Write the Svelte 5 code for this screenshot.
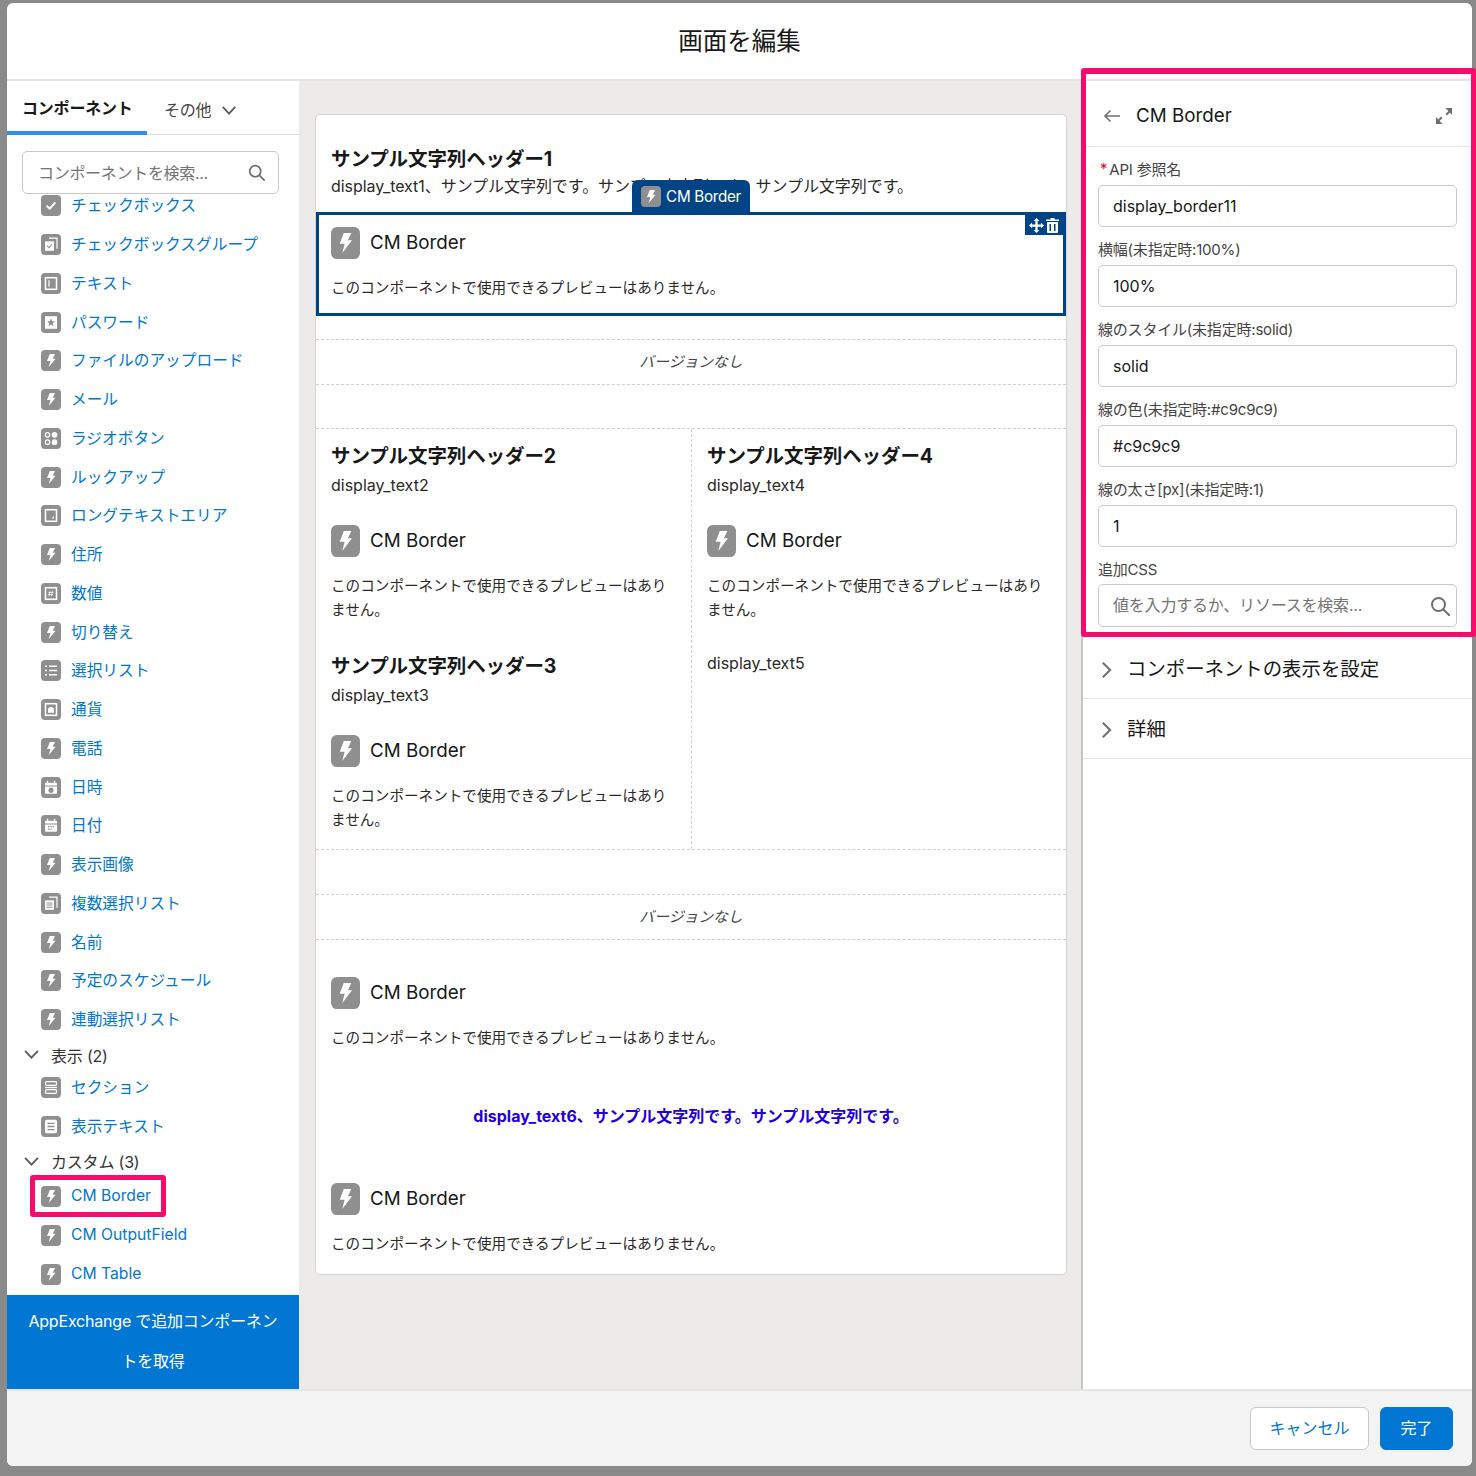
<script>
  // sidebar entries: [label, icon]
  const inputs = [
    ['チェックボックス', 'check'],
    ['チェックボックスグループ', 'checkgroup'],
    ['テキスト', 'text'],
    ['パスワード', 'password'],
    ['ファイルのアップロード', 'bolt'],
    ['メール', 'bolt'],
    ['ラジオボタン', 'radio'],
    ['ルックアップ', 'bolt'],
    ['ロングテキストエリア', 'longtext'],
    ['住所', 'bolt'],
    ['数値', 'number'],
    ['切り替え', 'bolt'],
    ['選択リスト', 'list'],
    ['通貨', 'currency'],
    ['電話', 'bolt'],
    ['日時', 'datetime'],
    ['日付', 'date'],
    ['表示画像', 'bolt'],
    ['複数選択リスト', 'multi'],
    ['名前', 'bolt'],
    ['予定のスケジュール', 'bolt'],
    ['連動選択リスト', 'bolt']
  ]
  const display = [
    ['セクション', 'section'],
    ['表示テキスト', 'doc']
  ]
  const custom = [
    ['CM Border', 'bolt'],
    ['CM OutputField', 'bolt'],
    ['CM Table', 'bolt']
  ]
  const fields = [
    ['横幅(未指定時:100%)', '100%'],
    ['線のスタイル(未指定時:solid)', 'solid'],
    ['線の色(未指定時:#c9c9c9)', '#c9c9c9'],
    ['線の太さ[px](未指定時:1)', '1']
  ]
  const noPreview = 'このコンポーネントで使用できるプレビューはありません。'
</script>

{#snippet icon(name, cls = 'ico')}
  <svg class={cls} viewBox="0 0 20 20" preserveAspectRatio="none">
    <rect width="20" height="20" rx="4" fill="#8f8f8f" />
    {#if name === 'bolt'}
      <path d="M8.800 3.800H14L11.700 8.300H14.500L7.800 16.200 9.400 10.500H6z" fill="#fff" />
    {:else if name === 'check'}
      <path d="M5.600 10.200 8.700 13l5.700-6" fill="none" stroke="#fff" stroke-width="2" />
    {:else if name === 'checkgroup'}
      <path d="M8 4h8v10" fill="none" stroke="#fff" stroke-width="1.200" />
      <rect x="4" y="7" width="9" height="9" fill="#fff" />
      <path d="m6 11 2 2 3-3.500" fill="none" stroke="#8f8f8f" stroke-width="1" />
    {:else if name === 'text'}
      <rect x="4.500" y="4.500" width="11" height="11" fill="none" stroke="#fff" stroke-width="1.500" />
      <path d="M8 7v6" stroke="#fff" stroke-width="1.200" />
    {:else if name === 'password'}
      <rect x="4" y="4" width="12" height="12" fill="#fff" />
      <path d="m10 6 1.100 2.700 2.900.2-2.200 1.800.7 2.800L10 11.900l-2.500 1.600.7-2.800L6 8.900l2.900-.2z" fill="#8f8f8f" />
    {:else if name === 'radio'}
      <circle cx="6.500" cy="6.500" r="2.200" fill="none" stroke="#fff" stroke-width="1.200" />
      <circle cx="13.500" cy="6.500" r="2.800" fill="#fff" />
      <circle cx="6.500" cy="13.500" r="2.200" fill="none" stroke="#fff" stroke-width="1.200" />
      <circle cx="13.500" cy="13.500" r="2.800" fill="#fff" />
    {:else if name === 'longtext'}
      <rect x="4.500" y="4.500" width="11" height="11" fill="none" stroke="#fff" stroke-width="1.500" />
      <path d="M12.800 10.500v2.300h-2.300z" fill="#fff" />
    {:else if name === 'number'}
      <rect x="4.500" y="4.500" width="11" height="11" fill="none" stroke="#fff" stroke-width="1.500" />
      <path d="M9 7.500 8 12.500M11.500 7.500l-1 5M7.300 9h5M7 11h5" stroke="#fff" stroke-width=".7" />
    {:else if name === 'list'}
      <path d="M8 6h8M8 10h8M8 14h8M4 6h2M4 10h2M4 14h2" stroke="#fff" stroke-width="1.400" />
    {:else if name === 'currency'}
      <rect x="4.500" y="4.500" width="11" height="11" fill="none" stroke="#fff" stroke-width="1.500" />
      <path d="M7 13v-2.500a3 3 0 0 1 6 0V13z" fill="#fff" />
    {:else if name === 'datetime' || name === 'date'}
      <path d="M4 6.500q0-1 1-1h10q1 0 1 1V8H4z" fill="#fff" />
      <path d="M6.500 3.500v2M13.500 3.500v2" stroke="#fff" stroke-width="1.400" />
      <path d="M4 9h12v6q0 1-1 1H5q-1 0-1-1z" fill="#fff" />
      {#if name === 'datetime'}
        <circle cx="10" cy="12.500" r="2.500" fill="#8f8f8f" />
      {:else}
        <path d="M7 11h1.400M9.300 11h1.400M11.600 11h1.400M7 13.500h1.400M9.300 13.500h1.400" stroke="#8f8f8f" stroke-width="1.200" />
      {/if}
    {:else if name === 'multi'}
      <path d="M8 4h8v10" fill="none" stroke="#fff" stroke-width="1.200" />
      <rect x="4" y="7" width="9" height="9" fill="#fff" />
      <path d="M5.500 9.500h6M5.500 11.500h6M5.500 13.500h6" stroke="#8f8f8f" stroke-width="1" />
    {:else if name === 'section'}
      <rect x="4.500" y="4.500" width="11" height="3.500" rx="1" fill="none" stroke="#fff" stroke-width="1.200" />
      <path d="M4 10h12" stroke="#fff" stroke-width="1.200" />
      <rect x="4.500" y="12" width="11" height="3.500" rx="1" fill="none" stroke="#fff" stroke-width="1.200" />
    {:else if name === 'doc'}
      <rect x="4" y="3.500" width="12" height="13" rx="1.500" fill="#fff" />
      <path d="M6.500 7h7M6.500 10h7M6.500 13h7" stroke="#8f8f8f" stroke-width="1.200" />
    {/if}
  </svg>
{/snippet}

{#snippet preview(selected = false)}
  <div class="preview" class:selected>
    {#if selected}
      <div class="drag-tab">{@render icon('bolt', 'tab-ico')}CM Border</div>
      <div class="actions">
        <svg width="15" height="15" viewBox="0 0 16 16" fill="#fff">
          <path d="M8 0 11 3.200H9.200v3.600h3.600V5L16 8l-3.200 3V9.200H9.200v3.600H11L8 16l-3-3.200h1.800V9.200H3.200V11L0 8l3.200-3v1.800h3.600V3.200H5z" />
        </svg>
        <svg width="13" height="15" viewBox="0 0 13 15" fill="#fff">
          <path d="M4.500 0h4v1.500H13V3H0V1.500h4.500zM1 4h11v10q0 1-1 1H2q-1 0-1-1zm2.500 2v7h1.500V6zm4.500 0v7h1.500V6z" />
        </svg>
      </div>
    {/if}
    <div class="preview-head">{@render icon('bolt', 'big-ico')}<span>CM Border</span></div>
    <p class="preview-text">{noPreview}</p>
  </div>
{/snippet}

{#snippet searchIcon(size)}
  <svg width={size} height={size} viewBox="0 0 20 20" fill="none" stroke="#706e6b" stroke-width="2">
    <circle cx="8.500" cy="8.500" r="6.500" />
    <path d="m13.500 13.500 5.500 5.500" stroke-linecap="round" />
  </svg>
{/snippet}

{#snippet chevronDown(cls)}
  <svg class={cls} viewBox="0 0 18 12" fill="none" stroke="#5c5c5c" stroke-width="2">
    <path d="m2 2 7 7.500L16 2" />
  </svg>
{/snippet}

{#snippet chevronRight()}
  <svg class="chev-right" viewBox="0 0 12 20" fill="none" stroke="#706e6b" stroke-width="2.200">
    <path d="m2 2 8 8-8 8" />
  </svg>
{/snippet}

{#snippet sideItem(item)}
  <div class="side-item">{@render icon(item[1])}<span>{item[0]}</span></div>
{/snippet}

<div class="page">
  <div class="modal">
    <header class="modal-head">画面を編集</header>

    <div class="modal-body">
      <aside class="left">
        <div class="tabs">
          <div class="tab active">コンポーネント</div>
          <div class="tab">その他 {@render chevronDown('tab-chev')}</div>
        </div>
        <div class="search">
          <span>コンポーネントを検索...</span>
          {@render searchIcon(17)}
        </div>
        <div class="side-scroll">
          <div class="side-inner">
            {#each inputs as item}
              {@render sideItem(item)}
            {/each}
            <div class="group tight">{@render chevronDown('group-chev')}表示 (2)</div>
            {#each display as item}
              {@render sideItem(item)}
            {/each}
            <div class="group">{@render chevronDown('group-chev')}カスタム (3)</div>
            <div class="marked">
              {@render sideItem(custom[0])}
              <div class="mark"></div>
            </div>
            {@render sideItem(custom[1])}
            {@render sideItem(custom[2])}
          </div>
        </div>
        <div class="appx">AppExchange で追加コンポーネントを取得</div>
      </aside>

      <main class="canvas">
        <div class="card">
          <div class="top-text">
            <h2>サンプル文字列ヘッダー1</h2>
            <p>display_text1、サンプル文字列です。サンプル文字列です。サンプル文字列です。</p>
          </div>
          {@render preview(true)}
          <div class="version first">バージョンなし</div>
          <div class="spacer"></div>
          <div class="cols">
            <div class="col">
              <div class="sec-text">
                <h2>サンプル文字列ヘッダー2</h2>
                <p>display_text2</p>
              </div>
              {@render preview()}
              <div class="sec-text next">
                <h2>サンプル文字列ヘッダー3</h2>
                <p>display_text3</p>
              </div>
              {@render preview()}
            </div>
            <div class="col">
              <div class="sec-text">
                <h2>サンプル文字列ヘッダー4</h2>
                <p>display_text4</p>
              </div>
              {@render preview()}
              <p class="plain">display_text5</p>
            </div>
          </div>
          <div class="spacer low"></div>
          <div class="version">バージョンなし</div>
          <div class="gap-top"></div>
          {@render preview()}
          <div class="blue-text">display_text6、サンプル文字列です。サンプル文字列です。</div>
          {@render preview()}
        </div>
      </main>

      <aside class="right">
        <div class="right-head">
          <svg width="18" height="14" viewBox="0 0 18 14" fill="none" stroke="#706e6b" stroke-width="1.600">
            <path d="M17 7H2M7.500 1.500 2 7l5.500 5.500" />
          </svg>
          <span class="right-title">CM Border</span>
          <svg width="16" height="18" viewBox="0 0 16 18" fill="#706e6b">
            <path d="M9.500 1H16v7l-2.200-2.400-2.800 3-1.500-1.500 2.900-3.200zM6.500 17H0v-7l2.200 2.400 2.800-3 1.500 1.500-2.900 3.200z" />
          </svg>
        </div>
        <div class="form">
          <div class="field">
            <div class="label"><span class="req">*</span>API 参照名</div>
            <div class="input">display_border11</div>
          </div>
          {#each fields as f}
            <div class="field">
              <div class="label">{f[0]}</div>
              <div class="input">{f[1]}</div>
            </div>
          {/each}
          <div class="field">
            <div class="label">追加CSS</div>
            <div class="input lookup">
              <span>値を入力するか、リソースを検索...</span>
              {@render searchIcon(20)}
            </div>
          </div>
        </div>
        <div class="accordion">{@render chevronRight()}コンポーネントの表示を設定</div>
        <div class="accordion">{@render chevronRight()}詳細</div>
      </aside>
    </div>

    <footer class="modal-foot">
      <button class="btn">キャンセル</button>
      <button class="btn brand">完了</button>
    </footer>
  </div>

  <div class="frame"></div>
</div>

<style>
  :global(body) {
    margin: 0;
    background: #8a8a8a;
  }

  .page {
    position: relative;
    box-sizing: border-box;
    width: 1476px;
    height: 1476px;
    padding: 3px 4px 10px 7px;
    background: #8a8a8a;
    overflow: hidden;
    font-family: Inter, "Noto Sans CJK JP", sans-serif;
    color: #2b2826;
  }

  .modal {
    display: flex;
    flex-direction: column;
    height: 100%;
    background: #fff;
    border-radius: 6px;
    overflow: hidden;
  }

  .modal-head {
    flex: none;
    height: 78px;
    box-sizing: border-box;
    display: flex;
    align-items: center;
    justify-content: center;
    font-size: 24.500px;
    color: #181818;
    padding-bottom: 3px;
    border-bottom: 2px solid #e5e5e5;
  }

  .modal-body {
    flex: 1;
    display: flex;
    min-height: 0;
  }

  /* left palette */
  .left {
    width: 292px;
    flex: none;
    display: flex;
    flex-direction: column;
    background: #fff;
  }

  .tabs {
    flex: none;
    height: 54px;
    box-sizing: border-box;
    display: flex;
    border-bottom: 1px solid #dddbda;
    font-size: 16px;
  }

  .tab {
    box-sizing: border-box;
    height: 54px;
    display: flex;
    align-items: center;
    padding: 1px 0 0 17px;
    color: #444;
    letter-spacing: -0.2px;
  }

  .tab.active {
    width: 140px;
    padding: 1px 0 0 15px;
    font-weight: 700;
    color: #181818;
    border-bottom: 4px solid #2e90e8;
  }

  .tab-chev {
    width: 16px;
    height: 11px;
    margin: 3px 0 0 10px;
  }

  .search {
    flex: none;
    box-sizing: border-box;
    width: 257px;
    height: 43px;
    margin: 16px 0 0 15px;
    display: flex;
    align-items: center;
    justify-content: space-between;
    padding: 0 13px 2px 15px;
    border: 1px solid #c9c9c9;
    border-radius: 5px;
    font-size: 16px;
    letter-spacing: -0.3px;
    color: #747474;
  }

  .search :global(svg) {
    margin-top: 2px;
  }

  .side-scroll {
    flex: 1;
    min-height: 0;
    overflow: hidden;
  }

  .side-inner {
    margin-top: -8px;
  }

  .side-item {
    height: 38.750px;
    display: flex;
    align-items: center;
    padding-left: 34px;
    font-size: 15.700px;
    color: #0176d3;
  }

  .side-item span {
    margin-left: 10px;
    margin-top: -1px;
  }

  .ico {
    width: 20px;
    height: 21px;
    flex: none;
    margin-top: 1px;
  }

  .group {
    height: 32px;
    display: flex;
    align-items: center;
    padding-left: 16px;
    font-size: 16px;
    letter-spacing: -0.2px;
    color: #333;
  }

  .group.tight {
    margin-bottom: -3px;
  }

  .group-chev {
    width: 17px;
    height: 11px;
    margin-right: 11px;
  }

  .marked {
    position: relative;
  }

  .mark {
    position: absolute;
    left: 23px;
    top: -2px;
    width: 136px;
    height: 42px;
    box-sizing: border-box;
    border: 5px solid #fa0a6a;
    border-radius: 3px;
  }

  .appx {
    flex: none;
    height: 94px;
    box-sizing: border-box;
    padding: 6px 16px 0;
    background: #0176d3;
    color: #fff;
    font-size: 16px;
    line-height: 40px;
    text-align: center;
    letter-spacing: -0.2px;
  }

  /* canvas */
  .canvas {
    flex: 1;
    min-width: 0;
    box-sizing: border-box;
    padding: 33px 14px 0 16px;
    background: #ecebea;
    overflow: hidden;
  }

  .card {
    box-sizing: border-box;
    height: 1161px;
    background: #fff;
    border: 1px solid #d4d4d4;
    border-radius: 5px;
  }

  h2 {
    margin: 0;
    font-size: 19.500px;
    line-height: 30px;
    font-weight: 700;
    color: #181818;
    letter-spacing: -0.1px;
  }

  p {
    margin: 0;
    font-size: 16px;
    line-height: 24px;
  }

  .top-text {
    height: 97px;
    box-sizing: border-box;
    padding: 29px 15px 0;
  }

  .top-text p {
    white-space: nowrap;
    letter-spacing: -0.05px;
  }

  .preview {
    position: relative;
    box-sizing: border-box;
    padding: 12px 12px 13px;
    border: 3px solid transparent;
  }

  .preview.selected {
    border-color: #014486;
  }

  .preview-head {
    display: flex;
    align-items: center;
    height: 32px;
    font-size: 18.800px;
    color: #181818;
  }

  .preview-head span {
    margin-left: 10px;
    margin-top: -1px;
  }

  .big-ico {
    width: 29px;
    height: 32px;
    flex: none;
  }

  .preview-text {
    margin-top: 17px;
    font-size: 14.600px;
    letter-spacing: 0;
  }

  .drag-tab {
    position: absolute;
    left: 313px;
    top: -35px;
    width: 118px;
    height: 32px;
    display: flex;
    align-items: center;
    justify-content: center;
    gap: 5px;
    background: #014486;
    border-radius: 6px 6px 0 0;
    color: #fff;
    font-size: 15.200px;
    letter-spacing: -0.3px;
  }

  .tab-ico {
    width: 20px;
    height: 21px;
  }

  .actions {
    position: absolute;
    right: 0;
    top: 0;
    width: 38px;
    height: 20px;
    display: flex;
    align-items: center;
    justify-content: center;
    gap: 2px;
    background: #014486;
  }

  .version {
    box-sizing: border-box;
    height: 46px;
    padding-bottom: 4px;
    display: flex;
    align-items: center;
    justify-content: center;
    border-top: 1px dashed #d0d0d0;
    border-bottom: 1px dashed #d0d0d0;
    font-size: 14.800px;
    font-style: italic;
    color: #444;
  }

  .version.first {
    margin-top: 23px;
  }

  .spacer {
    height: 43px;
  }

  .spacer.low {
    height: 44px;
  }

  .cols {
    height: 422px;
    box-sizing: border-box;
    display: flex;
    border-top: 1px dashed #d0d0d0;
    border-bottom: 1px dashed #d0d0d0;
  }

  .col {
    width: 50%;
    box-sizing: border-box;
  }

  .col + .col {
    border-left: 1px dashed #d0d0d0;
  }

  .sec-text {
    padding: 12px 15px 13px;
  }

  .sec-text.next {
    margin-top: 1px;
  }

  .sec-text p {
    margin-top: 2px;
  }

  .plain {
    padding: 13px 15px 0;
  }

  .gap-top {
    height: 22px;
  }

  .blue-text {
    height: 102px;
    box-sizing: border-box;
    padding-bottom: 4px;
    display: flex;
    align-items: center;
    justify-content: center;
    font-size: 16px;
    font-weight: 700;
    color: #2200dd;
  }

  /* right property panel */
  .right {
    flex: none;
    width: 391px;
    box-sizing: border-box;
    background: #fff;
    border-left: 2px solid #c6c6c6;
  }

  .right-head {
    height: 66px;
    box-sizing: border-box;
    display: flex;
    align-items: center;
    padding: 4px 20px 0 20px;
    border-bottom: 1px solid #e5e5e5;
  }

  .right-title {
    flex: 1;
    margin-left: 15px;
    font-size: 18.800px;
    color: #181818;
  }

  .form {
    padding: 11px 15px 0 15px;
  }

  .field {
    height: 80px;
  }

  .label {
    height: 27px;
    box-sizing: border-box;
    padding-bottom: 6px;
    display: flex;
    align-items: center;
    font-size: 15px;
    letter-spacing: -0.2px;
    color: #444;
  }

  .req {
    color: #ea001e;
    margin: 0 2px 0 2px;
  }

  .input {
    box-sizing: border-box;
    height: 42px;
    display: flex;
    align-items: center;
    justify-content: space-between;
    padding: 0 6px 0 14px;
    border: 1px solid #c9c9c9;
    border-radius: 5px;
    font-size: 16px;
    color: #181818;
  }

  .lookup {
    height: 43px;
    margin-top: -1px;
    padding-bottom: 3px;
    letter-spacing: -0.2px;
    color: #747474;
  }

  .lookup :global(svg) {
    margin-top: 3px;
  }

  .accordion {
    height: 60px;
    box-sizing: border-box;
    padding-bottom: 2px;
    display: flex;
    align-items: center;
    padding-left: 18px;
    font-size: 19.400px;
    color: #181818;
    border-bottom: 1px solid #e5e5e5;
  }

  .form + .accordion {
    margin-top: 1px;
  }

  .chev-right {
    width: 11px;
    height: 20px;
    margin: 5px 15px 0 0;
  }

  /* footer */
  .modal-foot {
    flex: none;
    height: 77px;
    box-sizing: border-box;
    display: flex;
    justify-content: flex-end;
    align-items: flex-start;
    gap: 11px;
    padding: 16px 19px 0 0;
    background: #f3f3f3;
    border-top: 2px solid #e5e5e5;
  }

  .btn {
    box-sizing: border-box;
    height: 43px;
    width: 119px;
    padding: 0 0 3px;
    background: #fff;
    border: 1px solid #c9c9c9;
    border-radius: 6px;
    font: inherit;
    font-size: 16px;
    color: #0176d3;
  }

  .btn.brand {
    width: 73px;
    background: #0176d3;
    border-color: #0176d3;
    color: #fff;
  }

  /* pink annotation around the property form */
  .frame {
    position: absolute;
    left: 1081px;
    top: 68px;
    width: 395px;
    height: 569px;
    box-sizing: border-box;
    border: 5px solid #fa0a6a;
    border-top-width: 6px;
    border-radius: 3px;
  }
</style>
